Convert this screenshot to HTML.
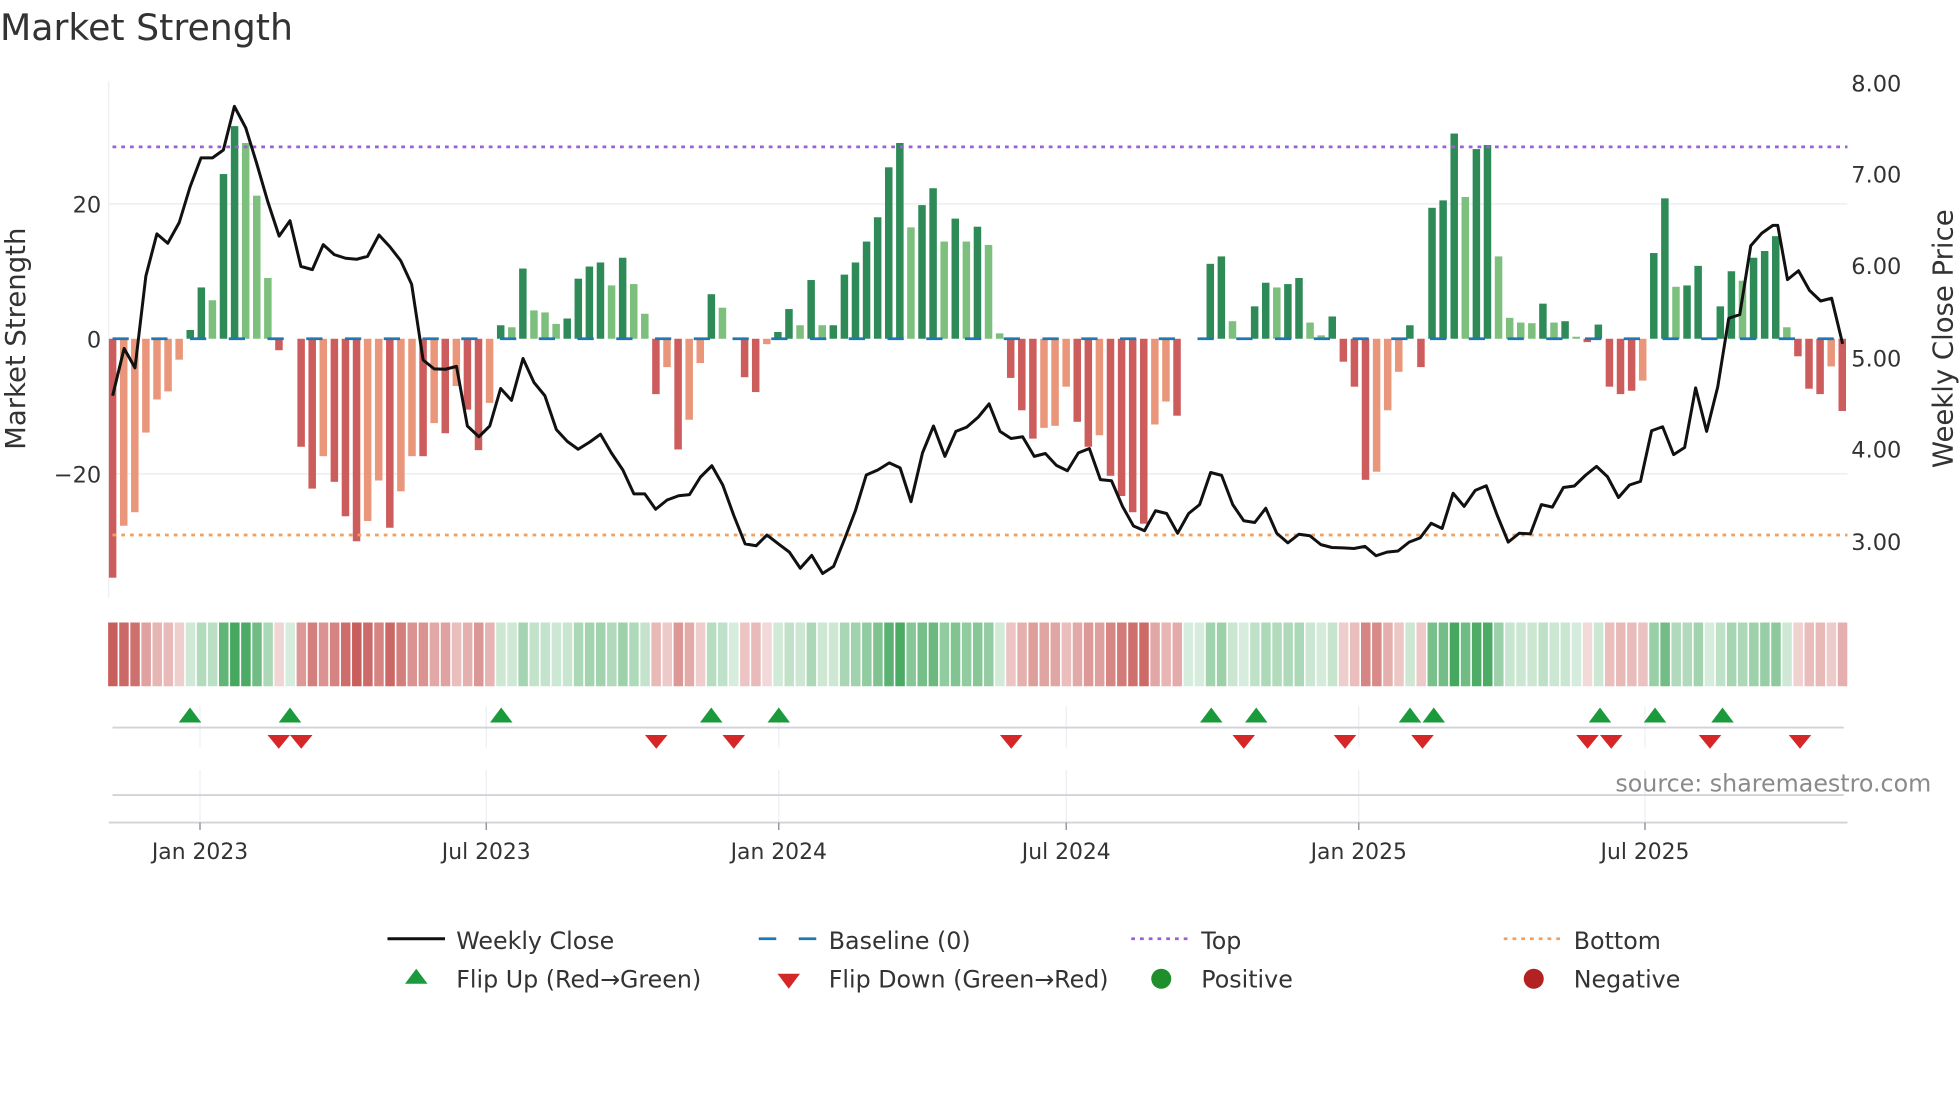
<!DOCTYPE html>
<html><head><meta charset="utf-8"><style>
html,body{margin:0;padding:0;background:#fff;}
svg{display:block;font-family:"DejaVu Sans","Liberation Sans",sans-serif;}
</style></head><body>
<svg id="s" width="1960" height="1102" viewBox="0 0 1568 881.6" xmlns="http://www.w3.org/2000/svg">
<rect width="1568" height="882" fill="#fff"/>
<text x="0" y="32" font-size="29" fill="#333">Market Strength</text>
<line x1="87" y1="65" x2="87" y2="478" stroke="#eceff3" stroke-width="1"/>
<line x1="87" y1="163" x2="1478" y2="163" stroke="#eef1f4" stroke-width="1.5"/>
<line x1="87" y1="379" x2="1478" y2="379" stroke="#eef1f4" stroke-width="1.5"/>
<g id="bars"></g>
<line x1="90" y1="271" x2="1478" y2="271" stroke="#1f77b4" stroke-width="2.2" stroke-dasharray="13 18"/>
<line x1="90" y1="117.5" x2="1478" y2="117.5" stroke="#9b5fd6" stroke-width="2.2" stroke-dasharray="3 4"/>
<line x1="90" y1="428" x2="1478" y2="428" stroke="#f0a060" stroke-width="2.2" stroke-dasharray="3 4"/>
<polyline id="price" fill="none" stroke="#111" stroke-width="2.4" stroke-linejoin="round"/>
<g font-size="18" fill="#333" text-anchor="end">
<text x="81" y="170">20</text><text x="81" y="278">0</text><text x="81" y="386">−20</text>
</g>
<text transform="translate(20,271) rotate(-90)" font-size="22" fill="#333" text-anchor="middle">Market Strength</text>
<g font-size="18" fill="#333">
<text x="1481" y="73">8.00</text><text x="1481" y="146">7.00</text><text x="1481" y="219">6.00</text>
<text x="1481" y="293">5.00</text><text x="1481" y="366">4.00</text><text x="1481" y="440">3.00</text>
</g>
<text transform="translate(1562,271) rotate(-90)" font-size="22" fill="#333" text-anchor="middle">Weekly Close Price</text>
<g id="heat"></g>
<g stroke="#eceff3" stroke-width="1">
<line x1="160" y1="565" x2="160" y2="598"/><line x1="389" y1="565" x2="389" y2="598"/><line x1="623" y1="565" x2="623" y2="598"/><line x1="853" y1="565" x2="853" y2="598"/><line x1="1087" y1="565" x2="1087" y2="598"/><line x1="1316" y1="565" x2="1316" y2="598"/>
<line x1="160" y1="616" x2="160" y2="658"/><line x1="389" y1="616" x2="389" y2="658"/><line x1="623" y1="616" x2="623" y2="658"/><line x1="853" y1="616" x2="853" y2="658"/><line x1="1087" y1="616" x2="1087" y2="658"/><line x1="1316" y1="616" x2="1316" y2="658"/>
</g>
<line x1="90" y1="582" x2="1475" y2="582" stroke="#d0d3d8" stroke-width="1.5"/>
<line x1="90" y1="636" x2="1475" y2="636" stroke="#d0d3d8" stroke-width="1.5"/>
<line x1="87" y1="658" x2="1478" y2="658" stroke="#d0d3d8" stroke-width="1.5"/>
<g id="marks"></g>
<text x="1545" y="633" font-size="19" fill="#8a8a8a" text-anchor="end">source: sharemaestro.com</text>
<g stroke="#999" stroke-width="1.2">
<line x1="160" y1="658" x2="160" y2="664"/><line x1="389" y1="658" x2="389" y2="664"/><line x1="623" y1="658" x2="623" y2="664"/><line x1="853" y1="658" x2="853" y2="664"/><line x1="1087" y1="658" x2="1087" y2="664"/><line x1="1316" y1="658" x2="1316" y2="664"/>
</g>
<g font-size="17.5" fill="#333" text-anchor="middle">
<text x="160" y="687">Jan 2023</text><text x="389" y="687">Jul 2023</text><text x="623" y="687">Jan 2024</text><text x="853" y="687">Jul 2024</text><text x="1087" y="687">Jan 2025</text><text x="1316" y="687">Jul 2025</text>
</g>
<g font-size="19" fill="#333">
<line x1="310" y1="751" x2="356" y2="751" stroke="#111" stroke-width="2.4"/>
<text x="365" y="759">Weekly Close</text>
<line x1="607" y1="751" x2="653" y2="751" stroke="#1f77b4" stroke-width="2.2" stroke-dasharray="14 18"/>
<text x="663" y="759">Baseline (0)</text>
<line x1="905" y1="751" x2="951" y2="751" stroke="#9b5fd6" stroke-width="2.2" stroke-dasharray="3 4"/>
<text x="961" y="759">Top</text>
<line x1="1203" y1="751" x2="1249" y2="751" stroke="#f0a060" stroke-width="2.2" stroke-dasharray="3 4"/>
<text x="1259" y="759">Bottom</text>
<polygon points="324,787 333,775 342,787" fill="#1a9a3a"/>
<text x="365" y="790">Flip Up (Red→Green)</text>
<polygon points="622,779 640,779 631,791" fill="#d62728"/>
<text x="663" y="790">Flip Down (Green→Red)</text>
<circle cx="929" cy="783" r="8" fill="#1f8f2c"/>
<text x="961" y="790">Positive</text>
<circle cx="1227" cy="783" r="8" fill="#b22222"/>
<text x="1259" y="790">Negative</text>
</g>
</svg>
<script>
(function(){
var NS="http://www.w3.org/2000/svg";
function el(t,a,p){var e=document.createElementNS(NS,t);for(var k in a)e.setAttribute(k,a[k]);p.appendChild(e);return e;}
var B=[[90.1,-35.4,1],[99.3,-27.7,0],[108,-25.7,0],[116.7,-13.9,0],[125.5,-9,0],[134.2,-7.8,0],[143.4,-3.1,0],[152,1.3,1],[160.8,7.6,1],[170,5.7,0],[178.7,24.4,1],[187.5,31.5,1],[196.6,29,0],[205.4,21.2,0],[214,9,0],[223.3,-1.7,1],[232,0,0],[240.7,-16,1],[250,-22.2,1],[258.6,-17.4,0],[267.4,-21.2,1],[276.5,-26.3,1],[285.3,-30,1],[294,-27,0],[303,-21,0],[312,-28,1],[320.6,-22.6,0],[329,-17.4,0],[338.5,-17.4,1],[347,-12.5,0],[356.4,-14,1],[365,-7,0],[374,-10.5,1],[383,-16.5,1],[392,-9.5,0],[400.5,2,1],[409,1.7,0],[418,10.4,1],[427,4.2,0],[436,3.9,0],[445,2.2,0],[454,3,1],[462.5,8.9,1],[471.7,10.7,1],[480,11.3,1],[489,7.9,0],[498,12,1],[507,8.1,0],[516,3.7,0],[524.5,-8.2,1],[533.7,-4.2,0],[543,-16.4,1],[551.6,-12,0],[560,-3.6,0],[569.5,6.6,1],[578,4.6,0],[587,0,0],[596,-5.7,1],[605,-7.9,1],[613.6,-0.8,0],[622.8,1,1],[631.5,4.4,1],[640,2,0],[649,8.7,1],[658,2,0],[667,2,1],[675.7,9.5,1],[684,11.3,1],[693,14.4,1],[702,18,1],[711,25.4,1],[720,29,1],[729,16.5,0],[738,19.8,1],[747,22.3,1],[756,14.4,0],[764.6,17.8,1],[773,14.4,0],[782.6,16.6,1],[791,13.9,0],[798.6,0.8,0],[808.8,-5.8,1],[818,-10.6,1],[827.4,-14.8,1],[836,-13.2,0],[845,-12.9,0],[854,-7.1,0],[862.7,-12.3,1],[871.5,-16,1],[880,-14.3,0],[889,-20.3,1],[898,-23.3,1],[906.8,-25.7,1],[915.6,-27.4,1],[924.4,-12.7,0],[933,-9.3,0],[942,-11.4,1],[951,0,0],[960,0,0],[968.5,11.1,1],[977,12.2,1],[986,2.6,0],[995,0,0],[1003.8,4.8,1],[1012.6,8.3,1],[1021,7.6,0],[1030,8.1,1],[1039,9,1],[1048,2.4,0],[1056.7,0.5,0],[1065.5,3.3,1],[1074,-3.4,1],[1083,-7.1,1],[1092,-20.9,1],[1100.8,-19.7,0],[1109.6,-10.6,0],[1118,-4.9,0],[1127,2,1],[1136,-4.2,1],[1145,19.4,1],[1153.7,20.5,1],[1162.5,30.4,1],[1171,21,0],[1180,28.1,1],[1189,28.7,1],[1197.8,12.2,0],[1206.6,3.1,0],[1215,2.4,0],[1224,2.3,0],[1233,5.2,1],[1242,2.4,0],[1250.7,2.6,1],[1259.5,0.3,0],[1268,-0.5,1],[1277,2.1,1],[1286,-7.1,1],[1294.8,-8.2,1],[1303.6,-7.7,1],[1312,-6.2,0],[1324,12.7,1],[1333,20.8,1],[1342,7.7,0],[1350.6,7.9,1],[1359,10.8,1],[1368,0,0],[1377,4.8,1],[1386,10,1],[1395,8.6,0],[1403.6,12,1],[1412,13,1],[1421,15.2,1],[1430,1.7,0],[1438.8,-2.6,1],[1447.6,-7.4,1],[1456.5,-8.2,1],[1465,-4.1,0],[1474,-10.7,1]];
var N=157,sp=8.87,x0=90.1,V=[];for(var i=0;i<N;i++)V.push(null);
B.forEach(function(b){var i=Math.round((b[0]-x0)/sp);if(i>=0&&i<N)V[i]=b;});
var gb=document.getElementById('bars'),gh=document.getElementById('heat');
var cols={g1:'#2e8b57',g0:'#7dbf7d',r1:'#cd5c5c',r0:'#e9967a'};
for(var i=0;i<N;i++){
 var x=x0+i*sp,b=V[i]||[x,0,0],v=b[1];
 if(Math.abs(v)>0.05){var h=Math.abs(v)*5.4;
  el('rect',{x:(x-3).toFixed(2),y:(v>0?271-h:271).toFixed(2),width:6,height:h.toFixed(2),fill:cols[(v>0?'g':'r')+b[2]]},gb);}
 var t=0.22+0.78*Math.min(Math.abs(v)/30,1),c;
 if(v>=0){c=[255+(70-255)*t,255+(168-255)*t,255+(95-255)*t];}
 else{c=[255+(200-255)*t,255+(95-255)*t,255+(92-255)*t];}
 el('rect',{x:(x-3.6).toFixed(2),y:498,width:7.6,height:51,fill:'rgb('+c.map(Math.round).join(',')+')'},gh);
}
var P1=[[22,940],[42,808],[61,862],[80,605],[99,487],[118,513],[138,455],[157,355],[176,274],[196,274],[215,252],[234,130],[254,190],[273,290],[292,395],[312,493],[331,450],[350,578],[370,587],[389,517],[408,545],[428,555],[447,558],[466,550],[486,490],[505,523],[524,562],[543,628],[563,840],[582,865],[602,866],[621,858],[640,1025],[660,1055],[679,1025],[698,920],[717,953],[737,836],[756,903],[775,940],[795,1035],[814,1068],[833,1090],[853,1070],[872,1048],[891,1100],[911,1148],[930,1215],[949,1215],[968,1258],[988,1232],[1008,1220],[1027,1217],[1046,1168],[1066,1136],[1085,1190],[1104,1275],[1124,1355],[1143,1360],[1162,1330],[1182,1355],[1201,1378],[1220,1423],[1240,1387],[1259,1438],[1278,1418],[1297,1342],[1316,1262],[1335,1162],[1355,1148],[1375,1128],[1394,1142],[1413,1237],[1433,1100],[1452,1025],[1472,1110],[1491,1040],[1510,1028],[1530,1000],[1549,963]];
var P2=[[0,1040],[18,1060],[37,1055],[56,1110],[74,1102],[92,1135],[110,1150],[128,1100],[146,1088],[164,1175],[182,1178],[200,1250],[218,1305],[236,1318],[254,1262],[272,1270],[290,1325],[308,1270],[326,1245],[344,1155],[362,1163],[380,1245],[398,1290],[416,1295],[434,1255],[452,1325],[470,1352],[488,1328],[506,1332],[524,1357],[542,1365],[560,1366],[578,1368],[596,1362],[614,1388],[632,1378],[650,1375],[668,1350],[686,1338],[704,1297],[722,1312],[740,1213],[758,1250],[776,1205],[794,1192],[812,1275],[830,1350],[848,1325],[866,1327],[884,1245],[902,1252],[920,1197],[938,1193],[956,1163],[974,1138],[992,1167],[1010,1225],[1028,1190],[1046,1180],[1064,1038],[1082,1027],[1100,1105],[1118,1085],[1136,918],[1154,1040],[1172,915],[1190,723],[1208,713],[1226,520],[1244,485],[1262,463],[1270,463],[1286,615],[1304,590],[1322,645],[1340,675],[1358,667],[1376,795]];
var pts=[];
P1.forEach(function(p){pts.push((80+p[0]*0.4592).toFixed(1)+','+(48+p[1]*0.2857).toFixed(1));});
P2.forEach(function(p){pts.push((800+p[0]*0.4899).toFixed(1)+','+(48+p[1]*0.2857).toFixed(1));});
document.getElementById('price').setAttribute('points',pts.join(' '));
var gm=document.getElementById('marks');
[152,232,401,569,623,969,1005,1128,1147,1280,1324,1378].forEach(function(x){el('polygon',{points:(x-9)+',578 '+x+',566 '+(x+9)+',578',fill:'#1a9a3a'},gm);});
[223,241,525,587,809,995,1076,1138,1270,1289,1368,1440].forEach(function(x){el('polygon',{points:(x-9)+',588 '+(x+9)+',588 '+x+',599',fill:'#d62728'},gm);});
})();
</script>
</body></html>
